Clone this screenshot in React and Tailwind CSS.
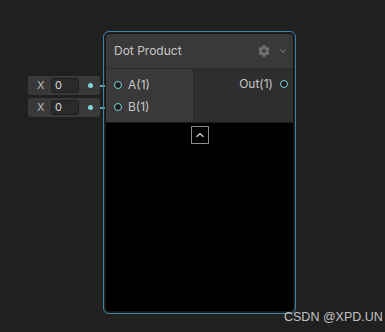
import { FaCog } from "react-icons/fa";
import { ChevronDown, ChevronUp } from "lucide-react";

// one port row on the input side of the node
function InPort({ label }) {
  return (
    <div className="flex items-center h-[22px] pl-[8px] gap-[6px]">
      <span className="w-[8px] h-[8px] rounded-full border-[1.5px] border-[#7fd3dc] bg-[#1d1d1d]" />
      <span className="text-[12px] text-[#c8c8c8]">{label}</span>
    </div>
  );
}

// default value field that sits outside the node, wired to a port
function ValueField({ top }) {
  return (
    <div className="absolute left-[28px] flex items-center" style={{ top }}>
      <div className="w-[72px] h-[19px] rounded-[3px] bg-[#393939] flex items-center pl-[9px]">
        <span className="text-[11px] text-[#bdbdbd] w-[14px]">X</span>
        <div className="w-[28px] h-[15px] rounded-[3px] bg-[#2a2a2a] border border-[#1e1e1e] flex items-center pl-[3px] text-[11px] text-[#d8d8d8]">0</div>
        <span className="ml-[9px] w-[5px] h-[5px] rounded-full bg-[#7fd3dc]" />
      </div>
      <div className="w-[18px] h-[2px] bg-[#5aaab4]" />
    </div>
  );
}

export default function App() {
  return (
    <div className="relative w-[385px] h-[332px] bg-[#202020] overflow-hidden" style={{ fontFamily: "Inter, 'Liberation Sans', sans-serif" }}>
      <ValueField top={76} />
      <ValueField top={98} />

      <div className="absolute left-[103px] top-[31px] w-[193px] h-[283px] rounded-[6px] border border-[#3d83a8] p-px">
        <div className="w-full h-full rounded-[5px] border border-[#161616] bg-black flex flex-col overflow-hidden">
          <div className="h-[35px] bg-[#393939] flex items-center pl-[8px] pr-[5px] border-b border-[#2a2a2a]">
            <span className="text-[12px] text-[#c6c6c6] flex-1">Dot Product</span>
            <FaCog className="text-[#6f6f6f] w-[12px] h-[12px] mr-[8px]" />
            <ChevronDown className="text-[#9a9a9a] w-[10px] h-[10px]" strokeWidth={2} />
          </div>
          <div className="flex h-[54px] border-b border-[#1a1a1a]">
            <div className="w-[88px] bg-[#393939] pt-[5px] border-r border-[#2a2a2a]">
              <InPort label="A(1)" />
              <InPort label="B(1)" />
            </div>
            <div className="flex-1 bg-[#2e2e2e] pt-[4px]">
              <div className="flex items-center justify-end h-[22px] pr-[5px] gap-[7px]">
                <span className="text-[12px] text-[#c8c8c8]">Out(1)</span>
                <span className="w-[8px] h-[8px] rounded-full border-[1.5px] border-[#7fd3dc] bg-[#1d1d1d]" />
              </div>
            </div>
          </div>
          <div className="flex justify-center pt-[3px]">
            <div className="w-[18px] h-[18px] border border-[#8a8a8a] flex items-center justify-center">
              <ChevronUp className="text-[#cfcfcf] w-[12px] h-[12px]" strokeWidth={2.5} />
            </div>
          </div>
        </div>
      </div>

      <span className="absolute left-[284px] top-[308px] text-[12.5px] text-[#c0c0c0]" style={{ fontFamily: "'Liberation Sans', sans-serif" }}>CSDN @XPD.UN</span>
    </div>
  );
}
